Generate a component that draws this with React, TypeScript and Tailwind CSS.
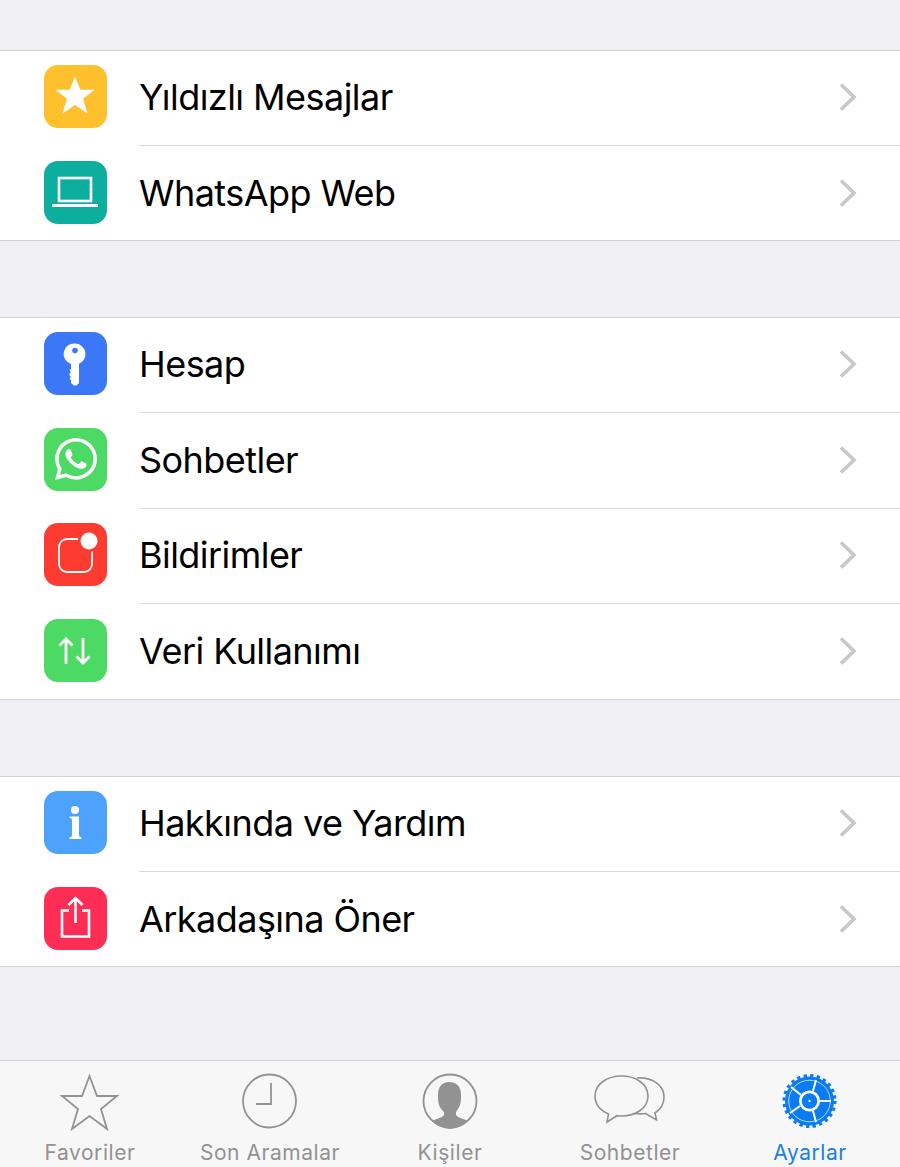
import type { ReactNode } from "react"
import { FaWhatsapp } from "react-icons/fa"

const font = "font-['Inter','Liberation_Sans',sans-serif]"

function StarIcon() {
  return (
    <svg viewBox="0 0 63 63" className="h-full w-full">
      <path d="M31 11.500l5.400 13.300h14.100l-11.400 9 4.400 14.700-12.500-8.500-12.500 8.500 4.400-14.700-11.400-9h14.100z" fill="white" />
    </svg>
  )
}

function LaptopIcon() {
  return (
    <svg viewBox="0 0 63 63" className="h-full w-full" fill="none" stroke="white">
      <rect x="15" y="17" width="32" height="23" strokeWidth="2.600" />
      <path d="M8 44.500h46" strokeWidth="3" />
    </svg>
  )
}

function KeyIcon() {
  return (
    <svg viewBox="0 0 63 63" className="h-full w-full">
      <path
        d="M31 11.500a10.500 10.500 0 0 1 4 20.200v19.300l-2.500 2.500h-2.500l-3-2.500v-3l-1.500-1.500 1.500-1.500-1.500-1.500v-2l1.500-1.500-1.500-1.500 1.500-1.500v-5a10.500 10.500 0 0 1 4-20.500z"
        fill="white"
      />
      <circle cx="31" cy="18.500" r="2.800" fill="#3b78f7" />
    </svg>
  )
}

function NotificationIcon() {
  return (
    <svg viewBox="0 0 63 63" className="h-full w-full" fill="none">
      <rect x="15" y="16" width="33" height="33" rx="8" stroke="white" strokeWidth="1.800" />
      <circle cx="45" cy="18" r="11" fill="#fe3b30" />
      <circle cx="45" cy="18" r="8.500" fill="white" />
    </svg>
  )
}

function ArrowsIcon() {
  return (
    <svg viewBox="0 0 63 63" className="h-full w-full" fill="none" stroke="white" strokeWidth="2.800">
      <path d="M22 45V20M15.500 26.500L22 20l6.500 6.500" />
      <path d="M39 19v25M32.500 37.500L39 44l6.500-6.500" />
    </svg>
  )
}

function InfoIcon() {
  return (
    <svg viewBox="0 0 63 63" className="h-full w-full" fill="white">
      <circle cx="31" cy="19" r="4" />
      <path d="M25.500 25.500h9.500v19q0 1.500 2.500 2v1.500h-12v-1.500q2.500-.5 2.500-2v-15.500q0-2-2.500-2z" />
    </svg>
  )
}

function ShareIcon() {
  return (
    <svg viewBox="0 0 63 63" className="h-full w-full" fill="none" stroke="white" strokeWidth="2.600">
      <path d="M25 23.500h-7v26h27v-26h-7" />
      <path d="M31.500 36V11M24.500 18l7-7 7 7" />
    </svg>
  )
}

function WhatsIcon() {
  return (
    <div className="flex h-full w-full items-center justify-center text-white">
      <FaWhatsapp size={48} />
    </div>
  )
}

type Item = { label: string; color: string; icon: ReactNode }
type Group = { height: string; items: Item[] }

const groups: Group[] = [
  {
    height: "h-[191px]",
    items: [
      { label: "Yıldızlı Mesajlar", color: "bg-[#fec02d]", icon: <StarIcon /> },
      { label: "WhatsApp Web", color: "bg-[#0cae9e]", icon: <LaptopIcon /> },
    ],
  },
  {
    height: "h-[383px]",
    items: [
      { label: "Hesap", color: "bg-[#3b78f7]", icon: <KeyIcon /> },
      { label: "Sohbetler", color: "bg-[#4cd964]", icon: <WhatsIcon /> },
      { label: "Bildirimler", color: "bg-[#fe3b30]", icon: <NotificationIcon /> },
      { label: "Veri Kullanımı", color: "bg-[#4cd964]", icon: <ArrowsIcon /> },
    ],
  },
  {
    height: "h-[191px]",
    items: [
      { label: "Hakkında ve Yardım", color: "bg-[#4da2fb]", icon: <InfoIcon /> },
      { label: "Arkadaşına Öner", color: "bg-[#fd2d55]", icon: <ShareIcon /> },
    ],
  },
]

function Row({ item, last }: { item: Item; last: boolean }) {
  return (
    <div className="flex h-[95.5px] items-start pl-[44px]">
      <div className={`mt-[14px] h-[63px] w-[63px] shrink-0 rounded-[14px] ${item.color}`}>{item.icon}</div>
      <div
        className={`ml-[32px] flex h-[95px] flex-1 items-center justify-between pb-[2px] pr-[42px] ${
          last ? "" : "border-b border-[#d9d9dc]"
        }`}
      >
        <span className="text-[36px] leading-none tracking-[-0.55px] text-black">{item.label}</span>
        <svg viewBox="0 0 20 30" className="h-[30px] w-[20px]" fill="none" stroke="#c7c7cc" strokeWidth="3.600">
          <path d="M3 2.500L16 15 3 27.500" />
        </svg>
      </div>
    </div>
  )
}

function TabStar() {
  return (
    <svg viewBox="0 0 80 60" className="h-[60px] w-[80px]" fill="none" stroke="#929292" strokeWidth="1.800">
      <path d="M39.500 5l7.500 20h20L51 38l6 20-17.500-13L22 58l6-20L12 25h20z" />
    </svg>
  )
}

function TabClock() {
  return (
    <svg viewBox="0 0 80 60" className="h-[60px] w-[80px]" fill="none" stroke="#929292" strokeWidth="1.800">
      <circle cx="39.500" cy="30" r="26.500" />
      <path d="M41 12v21H26" />
    </svg>
  )
}

function TabContact() {
  return (
    <svg viewBox="0 0 80 60" className="h-[60px] w-[80px]">
      <circle cx="40" cy="30" r="26.500" fill="none" stroke="#929292" strokeWidth="1.800" />
      <path
        d="M39 11c8 0 12 5 12 13 0 4 0 7-1 10-1 3-3 5-4 7v3c2 3 9 4 12 6a24.500 24.500 0 0 1-36 0c3-2 10-3 12-6v-3c-2-2-4-4-5-7-1-3-1-6-1-10 0-8 4-13 11-13z"
        fill="#929292"
      />
    </svg>
  )
}

function TabChats() {
  return (
    <svg viewBox="0 0 80 60" className="h-[60px] w-[80px]" fill="none" stroke="#929292" strokeWidth="1.600">
      <path d="M31.500 5C46 5 58 13 58 25S46 45 31.500 45c-1.500 0-3-.1-4.500-.3L17 51l1.500-8C10.500 39.500 5 33 5 25 5 13 17 5 31.500 5z" />
      <path d="M47 7c15-1 27 7 27 19 0 7-3.500 12.500-9 16l1.500 7-11-6.500c-3 .5-7 .5-10 0" />
    </svg>
  )
}

function TabGear() {
  const spokes = ["M43 20L46 9", "M50 30H61", "M43 40L46 51", "M30 35L20 42", "M31 24L21 16"]
  return (
    <svg viewBox="0 0 80 60" className="h-[60px] w-[80px]" fill="none">
      <circle cx="39.500" cy="30" r="25.500" stroke="#0a7bf0" strokeWidth="3" strokeDasharray="3.300 3.370" />
      <circle cx="39.500" cy="30" r="24.500" fill="#0a7bf0" />
      <circle cx="39.500" cy="30" r="20.800" stroke="#e3effc" strokeWidth="0.800" />
      <g stroke="white" strokeWidth="2">
        {spokes.map((d) => (
          <path key={d} d={d} />
        ))}
      </g>
      <circle cx="39.500" cy="30" r="10.500" fill="white" />
      <circle cx="39.500" cy="30" r="7.800" fill="#0a7bf0" />
      <circle cx="39.500" cy="30" r="1.200" fill="white" />
    </svg>
  )
}

const tabs = [
  { label: "Favoriler", icon: <TabStar />, active: false },
  { label: "Son Aramalar", icon: <TabClock />, active: false },
  { label: "Kişiler", icon: <TabContact />, active: false },
  { label: "Sohbetler", icon: <TabChats />, active: false },
  { label: "Ayarlar", icon: <TabGear />, active: true },
]

export default function App() {
  return (
    <div className={`flex h-[1167px] flex-col overflow-hidden bg-[#efeff4] ${font}`}>
      <div className="flex flex-col gap-[76px] pt-[50px]">
        {groups.map((group) => (
          <div
            key={group.items[0].label}
            className={`overflow-hidden border-y border-[#d2d2d6] bg-white ${group.height}`}
          >
            {group.items.map((item, i) => (
              <Row key={item.label} item={item} last={i === group.items.length - 1} />
            ))}
          </div>
        ))}
      </div>
      <div className="mt-auto grid h-[107px] grid-cols-5 border-t border-[#cfcfd3] bg-[#f7f7f7] pt-[10px]">
        {tabs.map((tab) => (
          <div key={tab.label} className="flex flex-col items-center">
            {tab.icon}
            <span
              className={`mt-[10px] text-[21px] leading-6 tracking-[0.55px] ${
                tab.active ? "text-[#1a80e0]" : "text-[#929292]"
              }`}
            >
              {tab.label}
            </span>
          </div>
        ))}
      </div>
    </div>
  )
}
